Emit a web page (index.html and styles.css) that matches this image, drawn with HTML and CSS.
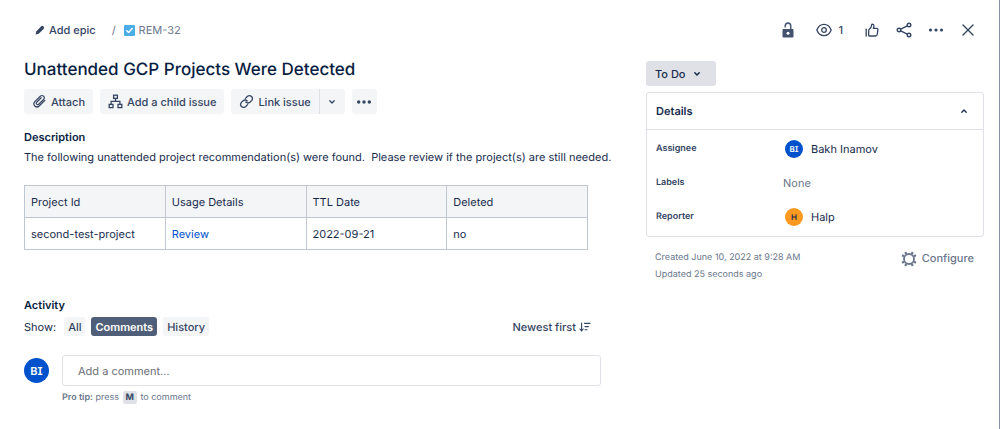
FILE: index.html
```html
<!DOCTYPE html>
<html lang="en">
<head>
  <meta charset="utf-8">
  <title>REM-32 Unattended GCP Projects Were Detected</title>
  <link rel="stylesheet" href="styles.css">
</head>
<body>
  <div class="issue">
    <header class="topbar">
      <nav class="breadcrumbs">
        <button class="plain add-epic">
          <svg width="10" height="10" viewBox="0 0 10 10"><path d="M.6 9.4 L1.2 6.4 L6 1.4 Q7.2 .3 8.5 1.5 Q9.7 2.8 8.6 4 L3.7 8.8 Z" fill="currentColor"/></svg>
          Add epic
        </button>
        <span class="slash">/</span>
        <a class="issue-key" href="#">
          <svg width="11" height="11" viewBox="0 0 11 11"><rect width="11" height="11" rx="1" fill="#4bade8"/><path d="M2.8 5.7 L4.6 7.5 L8.2 3.6" fill="none" stroke="#fff" stroke-width="1.5" stroke-linecap="round" stroke-linejoin="round"/></svg>
          REM-32
        </a>
      </nav>
      <div class="actions">
        <button class="plain" aria-label="Restrict">
          <svg width="16" height="16" viewBox="0 0 16 16"><rect x="2.5" y="7" width="11" height="8.5" rx="1" fill="#42526e"/><path d="M5.2 5 V4.2 Q5.2 1 8 1 Q10.8 1 10.8 4.2 V7" fill="none" stroke="#42526e" stroke-width="1.4" stroke-linecap="round"/><circle cx="8" cy="11.2" r="1.5" fill="#fff"/></svg>
        </button>
        <button class="plain watch" aria-label="Watchers">
          <svg width="16" height="16" viewBox="0 0 16 16"><path d="M.8 8 C2.3 4.2 5 2.4 8 2.4 S13.7 4.2 15.2 8 C13.7 11.8 11 13.6 8 13.6 S2.3 11.8 .8 8 Z" fill="none" stroke="currentColor" stroke-width="1.3"/><circle cx="8" cy="8" r="2.3" fill="none" stroke="currentColor" stroke-width="1.3"/></svg>
          1
        </button>
        <button class="plain" aria-label="Vote">
          <svg width="16" height="16" viewBox="0 0 16 16" fill="none" stroke="currentColor" stroke-width="1.3" stroke-linejoin="round" stroke-linecap="round"><path d="M2.2 7.2 V14"/><path d="M4.7 13.4 V8.6 Q4.7 7.7 5.4 7.1 Q7.6 5.3 7.6 2.9 Q7.7 2.1 8.5 2.1 Q10 2.2 9.9 4 Q9.9 5.3 9.3 6.4 H12.6 Q14 6.4 13.9 7.7 L13.2 12.5 Q13 14 11.6 14 H6 Q4.7 14 4.7 13.4 Z"/></svg>
        </button>
        <button class="plain" aria-label="Share">
          <svg width="16" height="16" viewBox="0 0 16 16" fill="none" stroke="currentColor" stroke-width="1.4"><circle cx="3" cy="8" r="1.8"/><circle cx="13" cy="3" r="1.8"/><circle cx="13" cy="13" r="1.8"/><path d="M4.7 7.1 L11.3 3.9 M4.7 8.9 L11.3 12.1"/></svg>
        </button>
        <button class="plain" aria-label="More">
          <svg width="16" height="16" viewBox="0 0 16 16" fill="currentColor"><circle cx="2.5" cy="8" r="1.6"/><circle cx="8" cy="8" r="1.6"/><circle cx="13.5" cy="8" r="1.6"/></svg>
        </button>
        <button class="plain" aria-label="Close">
          <svg width="16" height="16" viewBox="0 0 16 16"><path d="M3 3 L13 13 M13 3 L3 13" stroke="currentColor" stroke-width="1.4" stroke-linecap="round"/></svg>
        </button>
      </div>
    </header>

    <main class="main">
      <h1>Unattended GCP Projects Were Detected</h1>
      <div class="toolbar">
        <button class="btn">
          <svg width="15" height="15" viewBox="0 0 15 15"><path d="M12.9 6.3 L7.2 12 Q4.9 14 2.8 12 Q.8 9.8 2.8 7.6 L8.3 2.2 Q10 .8 11.6 2.2 Q13 3.8 11.6 5.5 L6.7 10.3 Q5.6 11.1 4.7 10.2 Q3.8 9.2 4.7 8.2 L9.2 3.8" fill="none" stroke="currentColor" stroke-width="1.2" stroke-linecap="round"/></svg>
          Attach
        </button>
        <button class="btn">
          <svg width="15" height="15" viewBox="0 0 15 15" fill="none" stroke="currentColor" stroke-width="1.3"><rect x="5.6" y="1.2" width="3.8" height="3.2"/><rect x="1.2" y="10.4" width="3.8" height="3.2"/><rect x="10" y="10.4" width="3.8" height="3.2"/><path d="M7.5 4.4 V7.4 M3.1 10.4 V7.4 H11.9 V10.4"/></svg>
          Add a child issue
        </button>
        <div class="split">
          <button class="btn">
            <svg width="15" height="15" viewBox="0 0 15 15" fill="none" stroke="currentColor" stroke-width="1.3" stroke-linecap="round"><path d="M6.4 4.4 L8.5 2.3 Q10.6 .8 12.6 2.5 Q14.3 4.5 12.6 6.6 L10.9 8.2 Q8.8 9.8 6.7 8.1"/><path d="M8.6 10.6 L6.5 12.7 Q4.4 14.2 2.4 12.5 Q.7 10.5 2.4 8.4 L4.1 6.8 Q6.2 5.2 8.3 6.9"/></svg>
            Link issue
          </button>
          <button class="btn icon-btn" aria-label="More link options">
            <svg width="8" height="8" viewBox="0 0 8 8"><path d="M1.8 2.8 L4 5 L6.2 2.8" fill="none" stroke="currentColor" stroke-width="1.3" stroke-linecap="round" stroke-linejoin="round"/></svg>
          </button>
        </div>
        <button class="btn icon-btn" aria-label="More actions">
          <svg width="16" height="16" viewBox="0 0 16 16" fill="currentColor"><circle cx="2.7" cy="8" r="1.7"/><circle cx="8" cy="8" r="1.7"/><circle cx="13.3" cy="8" r="1.7"/></svg>
        </button>
      </div>

      <section class="description">
        <h2>Description</h2>
        <p>The following unattended project recommendation(s) were found.&nbsp; Please review if the project(s) are still needed.</p>
        <table>
          <thead>
            <tr><th>Project Id</th><th>Usage Details</th><th>TTL Date</th><th>Deleted</th></tr>
          </thead>
          <tbody>
            <tr><td>second-test-project</td><td><a href="#">Review</a></td><td>2022-09-21</td><td>no</td></tr>
          </tbody>
        </table>
      </section>

      <section class="activity">
        <h2>Activity</h2>
        <div class="filters">
          <span>Show:</span>
          <button class="tab">All</button>
          <button class="tab selected">Comments</button>
          <button class="tab">History</button>
          <button class="plain sort">
            Newest first
            <svg width="12" height="12" viewBox="0 0 12 12" fill="none" stroke="currentColor" stroke-width="1.1" stroke-linecap="round"><path d="M2.6 2 V9.6 M1 8 L2.6 9.8 L4.2 8 M5.6 2.4 H11 M6 5.6 H9.4 M6 8.8 H8"/></svg>
          </button>
        </div>
        <div class="comment">
          <span class="avatar large">BI</span>
          <input class="comment-box" type="text" placeholder="Add a comment…" aria-label="Add a comment">
          <p class="tip"><b>Pro tip:</b> press <kbd>M</kbd> to comment</p>
        </div>
      </section>
    </main>

    <aside class="sidebar">
      <button class="status">
        To Do
        <svg width="8" height="8" viewBox="0 0 8 8"><path d="M1.8 2.8 L4 5 L6.2 2.8" fill="none" stroke="currentColor" stroke-width="1.5" stroke-linecap="round" stroke-linejoin="round"/></svg>
      </button>
      <section class="details">
        <button class="details-head" aria-expanded="true">
          Details
          <svg width="8" height="8" viewBox="0 0 8 8"><path d="M1.8 5.2 L4 3 L6.2 5.2" fill="none" stroke="currentColor" stroke-width="1.3" stroke-linecap="round" stroke-linejoin="round"/></svg>
        </button>
        <dl>
          <dt>Assignee</dt>
          <dd><span class="avatar">BI</span>Bakh Inamov</dd>
          <dt>Labels</dt>
          <dd class="none">None</dd>
          <dt>Reporter</dt>
          <dd><span class="avatar orange">H</span>Halp</dd>
        </dl>
      </section>
      <footer class="meta">
        <div>
          <p>Created June 10, 2022 at 9:28 AM</p>
          <p>Updated 25 seconds ago</p>
        </div>
        <button class="plain configure">
          <svg width="16" height="16" viewBox="0 0 16 16" fill="none" stroke="currentColor"><circle cx="8" cy="8" r="5" stroke-width="1.8"/><path d="M5.2 3.1 L4.3 1 M10.8 3.1 L11.7 1 M5.2 12.9 L4.3 15 M10.8 12.9 L11.7 15 M3.1 5.2 L1 4.3 M3.1 10.8 L1 11.7 M12.9 5.2 L15 4.3 M12.9 10.8 L15 11.7" stroke-width="2.2"/></svg>
          Configure
        </button>
      </footer>
    </aside>
  </div>
</body>
</html>
```

FILE: styles.css
```css
* {
  box-sizing: border-box;
}

body {
  margin: 0;
  background: #fff;
  color: #172b4d;
  font-family: Inter, "Liberation Sans", sans-serif;
  font-size: 11px;
  line-height: 16px;
  text-rendering: geometricPrecision;
}

h1, h2, p, dl, dd {
  margin: 0;
}

svg {
  flex: none;
}

button {
  display: flex;
  align-items: center;
  margin: 0;
  padding: 0;
  border: none;
  color: #344563;
  font: inherit;
  font-weight: 500;
  text-rendering: inherit;
  white-space: nowrap;
  cursor: pointer;
}

a {
  color: #0052cc;
  text-decoration: none;
}

.plain {
  background: none;
}

.issue {
  display: grid;
  grid-template-columns: minmax(0, 577fr) minmax(0, 338fr);
  column-gap: 45px;
  min-height: 100vh;
  align-content: start;
  padding: 20px 15px 20px 24px;
  border-right: 1px solid #8993a4;
}

/* Top bar */
.topbar {
  grid-column: 1 / -1;
  display: flex;
  justify-content: space-between;
  align-items: center;
  height: 20px;
  padding: 0 8px 0 11px;
}

.breadcrumbs {
  display: flex;
  align-items: center;
}

.add-epic {
  gap: 4px;
}

.slash {
  margin: 0 8px 0 16px;
  color: #6b778c;
}

.issue-key {
  display: flex;
  align-items: center;
  gap: 4px;
  color: #6b778c;
}

.actions {
  display: flex;
  align-items: center;
  gap: 16px;
}

.actions .watch {
  gap: 6px;
  margin: 0 5px 0 4px;
}

/* Issue content */
h1 {
  margin-top: 18px;
  color: #091e42;
  font-size: 17px;
  font-weight: 500;
  line-height: 24px;
}

h2 {
  color: #091e42;
  font-size: 11px;
  font-weight: 600;
  line-height: 16px;
}

.toolbar {
  display: flex;
  gap: 7px;
  margin-top: 7px;
}

.btn {
  gap: 4px;
  height: 25px;
  padding: 0 8px;
  border-radius: 3px;
  background: #f4f5f7;
}

.icon-btn {
  justify-content: center;
  width: 25px;
  padding: 0;
}

.split {
  display: flex;
}

.split .btn:first-child {
  border-radius: 3px 0 0 3px;
}

.split .icon-btn {
  width: 26px;
  border-left: 1px solid #dfe1e6;
  border-radius: 0 3px 3px 0;
}

.description {
  margin-top: 15px;
  padding-right: 13px;
}

.description p {
  margin-top: 4px;
  white-space: nowrap;
}

table {
  width: 100%;
  margin-top: 20px;
  border-collapse: collapse;
  table-layout: fixed;
}

th, td {
  height: 32px;
  padding: 0 6px;
  border: 1px solid #c1c7d0;
  font-weight: 400;
  text-align: left;
}

th {
  background: #f4f5f7;
}

.activity {
  margin-top: 47px;
}

.filters {
  display: flex;
  align-items: center;
  gap: 6px;
  margin-top: 4px;
}

.filters span {
  margin-right: 2px;
}

.tab {
  height: 19px;
  padding: 0 4px;
  border-radius: 3px;
  background: #f4f5f7;
}

.tab.selected {
  background: #505f79;
  color: #fff;
  font-weight: 600;
}

.sort {
  gap: 3px;
  margin-left: auto;
  margin-right: 10px;
}

.comment {
  display: grid;
  grid-template-columns: 26px 1fr;
  column-gap: 12px;
  align-items: center;
  margin-top: 19px;
}

.comment-box {
  height: 31px;
  padding: 0 15px;
  border: 1px solid #dfe1e6;
  border-radius: 3px;
  color: #172b4d;
  font: inherit;
  text-rendering: inherit;
}

.comment-box::placeholder {
  color: #6b6e76;
  opacity: 1;
}

.tip {
  grid-column: 2;
  margin-top: 4px;
  color: #6b778c;
  font-size: 9px;
}

.tip b {
  font-weight: 600;
}

kbd {
  margin: 0 1px;
  padding: 1px 3px;
  border-radius: 2px;
  background: #dfe1e6;
  color: #344563;
  font: inherit;
  font-weight: 700;
}

.avatar {
  display: flex;
  align-items: center;
  justify-content: center;
  width: 18px;
  height: 18px;
  border-radius: 50%;
  background: #0052cc;
  color: #fff;
  font-size: 8px;
  font-weight: 600;
  font-feature-settings: "cv08";
}

.avatar.large {
  width: 25px;
  height: 25px;
  font-size: 11px;
}

.avatar.orange {
  background: #ff991f;
  color: #172b4d;
}

/* Sidebar */
.sidebar {
  padding-top: 21px;
}

.status {
  gap: 8px;
  height: 25px;
  padding: 0 15px 0 9px;
  border-radius: 3px;
  background: #dfe1e6;
  color: #172b4d;
}

.details {
  margin-top: 6px;
  border: 1px solid #dfe1e6;
  border-radius: 3px;
}

.details-head {
  justify-content: space-between;
  width: 100%;
  height: 37px;
  padding: 0 15px 0 9px;
  border-bottom: 1px solid #dfe1e6;
  background: none;
  color: #172b4d;
  font-weight: 600;
}

dl {
  display: grid;
  grid-template-columns: 127px 1fr;
  grid-auto-rows: 34px;
  align-items: center;
  padding: 2px 9px;
}

dt {
  color: #344563;
  font-size: 9px;
  font-weight: 600;
}

dd {
  display: flex;
  align-items: center;
  gap: 8px;
  padding-left: 2px;
}

dd.none {
  padding-left: 0;
  color: #6b778c;
}

.meta {
  display: flex;
  justify-content: space-between;
  align-items: flex-start;
  margin-top: 12px;
  padding: 0 10px 0 9px;
  color: #6b778c;
  font-size: 9px;
  line-height: 17px;
}

.configure {
  gap: 5px;
  margin-top: 1px;
  color: #6b778c;
  font-size: 11px;
}
```
